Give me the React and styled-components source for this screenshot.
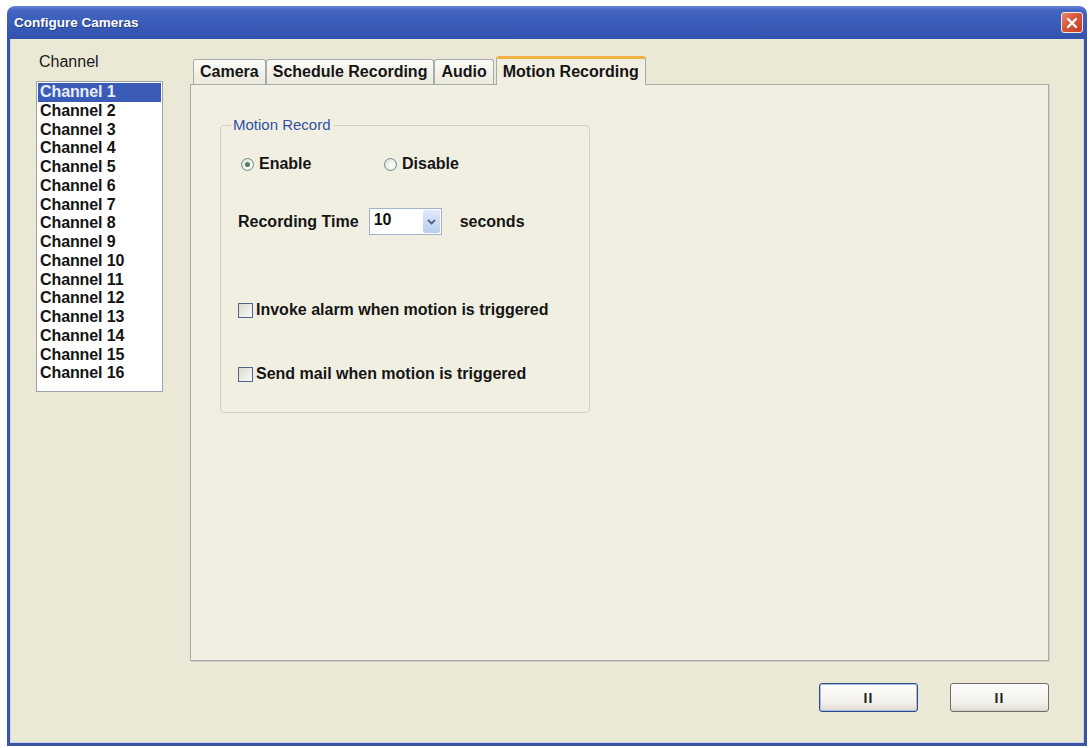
import React from "react";
import styled, { createGlobalStyle } from "styled-components";

const GlobalStyle = createGlobalStyle`
  html, body {
    margin: 0;
    padding: 0;
    background: #ffffff;
  }
  body {
    font-family: "Liberation Sans", Arial, sans-serif;
    color: #111;
  }
`;

const Window = styled.div`
  display: flex;
  flex-direction: column;
  width: 1080px;
  height: 740px;
  margin: 6px 0 0 7px;
`;

const TitleBar = styled.div`
  display: flex;
  align-items: center;
  justify-content: space-between;
  height: 33px;
  padding: 0 4px 0 7px;
  border-radius: 8px 8px 0 0;
  background: linear-gradient(
    #6a88d6 0%,
    #4465c2 12%,
    #3a5cba 50%,
    #3253ad 100%
  );
  box-sizing: border-box;
`;

const Title = styled.span`
  color: #ffffff;
  font-family: "Liberation Sans", Arial, sans-serif;
  font-weight: bold;
  font-size: 13.5px;
  text-shadow: 1px 1px 0 #25408a;
`;

const CloseButton = styled.div`
  display: flex;
  align-items: center;
  justify-content: center;
  width: 22px;
  height: 21px;
  border: 1px solid #f4e6e0;
  border-radius: 3px;
  background: linear-gradient(135deg, #ea8a6c 0%, #d9553a 45%, #c2402a 100%);
  box-sizing: border-box;
`;

const Body = styled.div`
  flex: 1;
  display: flex;
  flex-direction: column;
  padding: 14px 35px 0 26px;
  background: #ebe8d6;
  border: 3px solid #3a55a4;
  border-top: none;
  box-shadow: inset 1px 0 0 #c9d2ec, inset -1px 0 0 #c9d2ec, inset 0 -1px 0 #c9d2ec;
`;

const Main = styled.div`
  display: flex;
  gap: 27px;
  height: 608px;
`;

const LeftColumn = styled.div`
  display: flex;
  flex-direction: column;
  width: 127px;
`;

const ChannelLabel = styled.div`
  height: 28px;
  padding-left: 3px;
  font-size: 16px;
  line-height: 18px;
  color: #1a1a1a;
`;

const ListBox = styled.div`
  height: 311px;
  border: 1px solid #9aa3b0;
  background: #ffffff;
  padding: 1px;
  box-sizing: border-box;
`;

const ListItem = styled.div`
  height: 18.75px;
  line-height: 18.75px;
  padding-left: 2px;
  font-size: 16px;
  font-weight: bold;
  letter-spacing: -0.1px;
  color: ${({ $selected }) => ($selected ? "#e8eeff" : "#141414")};
  background: ${({ $selected }) => ($selected ? "#3a5cb8" : "transparent")};
`;

const RightColumn = styled.div`
  flex: 1;
  display: flex;
  flex-direction: column;
`;

const TabStrip = styled.div`
  display: flex;
  align-items: flex-end;
  height: 31px;
  padding-left: 3px;
`;

const Tab = styled.div`
  position: relative;
  z-index: ${({ $active }) => ($active ? 2 : 1)};
  display: flex;
  align-items: center;
  height: ${({ $active }) => ($active ? "29px" : "25px")};
  margin-bottom: ${({ $active }) => ($active ? "-1px" : "0")};
  margin-left: ${({ $active }) => ($active ? "2px" : "0")};
  padding: 0 6px;
  font-size: 16px;
  font-weight: bold;
  color: #151515;
  border: 1px solid #a6acac;
  border-bottom: none;
  border-top: ${({ $active }) => ($active ? "3px solid #f0b044" : "1px solid #a6acac")};
  border-radius: 3px 3px 0 0;
  background: ${({ $active }) =>
    $active ? "#f1efe2" : "linear-gradient(#fbfbf8, #ebe9dc)"};
  box-sizing: border-box;
  white-space: nowrap;
`;

const Panel = styled.div`
  flex: 1;
  padding: 31px 0 0 29px;
  background: #f1efe2;
  border: 1px solid #a6acac;
  box-shadow: 1px 1px 0 #d2d0c2;
`;

const GroupBox = styled.fieldset`
  width: 370px;
  height: 297px;
  margin: 0;
  padding: 0 0 0 17px;
  border: 1px solid #d3d1c2;
  border-radius: 4px;
  box-sizing: border-box;
`;

const Legend = styled.legend`
  margin-left: -7px;
  padding: 0 2px;
  font-size: 15px;
  line-height: 18px;
  color: #3350a6;
`;

const GroupContent = styled.div`
  display: flex;
  flex-direction: column;
  padding-top: 20px;
`;

const RadioRow = styled.div`
  display: grid;
  grid-template-columns: 143px auto;
  height: 20px;
  align-items: center;
  padding-left: 3px;
`;

const OptionLabel = styled.label`
  display: flex;
  align-items: center;
  gap: ${({ $gap }) => $gap || "5px"};
  font-size: 16px;
  font-weight: bold;
  color: #151515;
`;

const RadioCircle = styled.span`
  display: flex;
  align-items: center;
  justify-content: center;
  width: 13px;
  height: 13px;
  border: 1px solid #6e8a86;
  border-radius: 50%;
  background: radial-gradient(circle at 60% 60%, #ffffff, #dcdcd2);
  box-sizing: border-box;
  &::after {
    content: "";
    display: ${({ $checked }) => ($checked ? "block" : "none")};
    width: 5px;
    height: 5px;
    border-radius: 50%;
    background: #4d7f62;
  }
`;

const TimeRow = styled.div`
  display: flex;
  align-items: center;
  height: 27px;
  margin-top: 34px;
`;

const FieldLabel = styled.span`
  font-size: 16px;
  font-weight: bold;
  color: #151515;
  margin-right: ${({ $mr }) => $mr || "0"};
`;

const ComboBox = styled.div`
  display: flex;
  align-items: stretch;
  width: 73px;
  height: 27px;
  margin-right: 18px;
  border: 1px solid #a3b3cb;
  background: #ffffff;
  box-sizing: border-box;
`;

const ComboValue = styled.span`
  flex: 1;
  padding: 2px 0 0 4px;
  font-size: 16px;
  font-weight: bold;
  color: #111;
`;

const ComboArrow = styled.span`
  display: flex;
  align-items: center;
  justify-content: center;
  width: 17px;
  margin: 1px;
  border-radius: 2px;
  background: linear-gradient(#dfe8fb, #bccdf2);
`;

const CheckRow = styled.div`
  display: flex;
  align-items: center;
  height: 20px;
  margin-top: ${({ $mt }) => $mt};
`;

const CheckBox = styled.span`
  width: 15px;
  height: 15px;
  border: 1px solid #4d6590;
  background: linear-gradient(135deg, #dcdcd4, #f8f8f5);
  box-sizing: border-box;
`;

const ButtonRow = styled.div`
  display: flex;
  justify-content: flex-end;
  gap: 32px;
  margin-top: 22px;
`;

const Button = styled.button`
  width: 99px;
  height: 29px;
  padding: 0;
  border: 1px solid ${({ $default }) => ($default ? "#2f4e86" : "#6e6e6e")};
  border-radius: 3px;
  background: linear-gradient(#ffffff 0%, #f1f0ea 70%, #dedbcf 100%);
  box-shadow: ${({ $default }) =>
    $default ? "inset 0 0 0 1px #a9bde6" : "inset 0 -1px 0 #d6d0bd"};
  font-family: "Liberation Sans", Arial, sans-serif;
  font-size: 14px;
  font-weight: bold;
  letter-spacing: 1px;
  color: #222;
`;

const channels = Array.from({ length: 16 }, (_, i) => `Channel ${i + 1}`);
const tabs = ["Camera", "Schedule Recording", "Audio", "Motion Recording"];

const App = () => {
  return (
    <>
      <GlobalStyle />
      <Window>
        <TitleBar>
          <Title>Configure Cameras</Title>
          <CloseButton>
            <svg width="12" height="12" viewBox="0 0 12 12">
              <path
                d="M2 2 L10 10 M10 2 L2 10"
                stroke="#ffffff"
                strokeWidth="2.4"
                strokeLinecap="round"
              />
            </svg>
          </CloseButton>
        </TitleBar>
        <Body>
          <Main>
            <LeftColumn>
              <ChannelLabel>Channel</ChannelLabel>
              <ListBox>
                {channels.map((name, i) => (
                  <ListItem key={name} $selected={i === 0}>
                    {name}
                  </ListItem>
                ))}
              </ListBox>
            </LeftColumn>
            <RightColumn>
              <TabStrip>
                {tabs.map((t) => (
                  <Tab key={t} $active={t === "Motion Recording"}>
                    {t}
                  </Tab>
                ))}
              </TabStrip>
              <Panel>
                <GroupBox>
                  <Legend>Motion Record</Legend>
                  <GroupContent>
                    <RadioRow>
                      <OptionLabel>
                        <RadioCircle $checked />
                        Enable
                      </OptionLabel>
                      <OptionLabel>
                        <RadioCircle />
                        Disable
                      </OptionLabel>
                    </RadioRow>
                    <TimeRow>
                      <FieldLabel $mr="10px">Recording Time</FieldLabel>
                      <ComboBox>
                        <ComboValue>10</ComboValue>
                        <ComboArrow>
                          <svg width="9" height="6" viewBox="0 0 9 6">
                            <path
                              d="M1 1 L4.5 4.5 L8 1"
                              stroke="#4d6185"
                              strokeWidth="1.8"
                              fill="none"
                            />
                          </svg>
                        </ComboArrow>
                      </ComboBox>
                      <FieldLabel>seconds</FieldLabel>
                    </TimeRow>
                    <CheckRow $mt="65px">
                      <OptionLabel $gap="3px">
                        <CheckBox />
                        Invoke alarm when motion is triggered
                      </OptionLabel>
                    </CheckRow>
                    <CheckRow $mt="44px">
                      <OptionLabel $gap="3px">
                        <CheckBox />
                        Send mail when motion is triggered
                      </OptionLabel>
                    </CheckRow>
                  </GroupContent>
                </GroupBox>
              </Panel>
            </RightColumn>
          </Main>
          <ButtonRow>
            <Button $default>II</Button>
            <Button>II</Button>
          </ButtonRow>
        </Body>
      </Window>
    </>
  );
};

export default App;
